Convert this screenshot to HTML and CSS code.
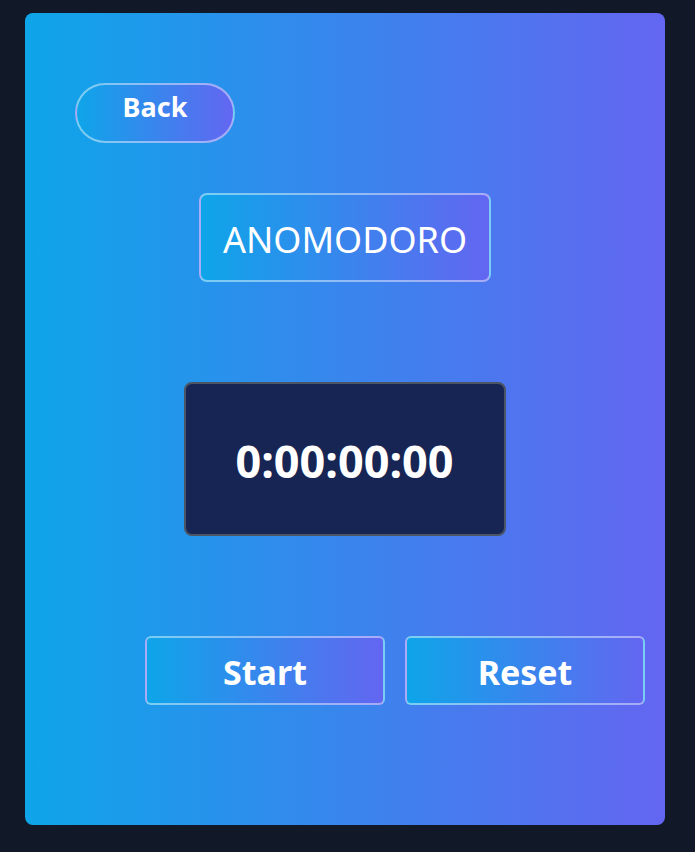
FILE: index.html
```html
<!DOCTYPE html>
<html>
<head>
<meta charset="utf-8">
<link rel="stylesheet" href="styles.css">
</head>
<body>
<div class="card">
  <div class="back-row"><button class="btn back">Back</button></div>
  <div class="title-row"><div class="grad title">ANOMODORO</div></div>
  <div class="timer-row"><div class="timer">0:00:00:00</div></div>
  <div class="actions">
    <button class="btn action">Start</button>
    <button class="btn action">Reset</button>
  </div>
</div>
</body>
</html>
```
FILE: styles.css
```css
html, body { margin: 0; padding: 0; }
body {
  background: #111827;
  width: 695px;
  height: 852px;
  font-family: "Noto Sans", "Open Sans", sans-serif;
  color: #fff;
  padding: 13px 0 0 25px;
  box-sizing: border-box;
}
.card {
  width: 640px;
  height: 812px;
  border-radius: 8px;
  background: linear-gradient(to right, #0ea5e9, #6366f1);
  box-sizing: border-box;
  padding: 70px 0 0 50px;
  display: flex;
  flex-direction: column;
}
.btn, .grad {
  background: linear-gradient(to right, #0ea5e9, #6366f1);
  border: 2px solid rgba(255,255,255,0.45);
  color: #fff;
  font-family: inherit;
  box-sizing: border-box;
  padding: 0;
}
.back {
  width: 160px;
  height: 60px;
  border-radius: 30px;
  font-size: 27px;
  font-weight: 700;
  line-height: 44px;
  display: block;
  text-align: center;
  padding-bottom: 14px;
}
.title-row { display: flex; justify-content: center; margin: 50px 0 0 -50px; }
.title {
  width: 292px;
  height: 89px;
  border-radius: 8px;
  font-size: 36px;
  display: flex;
  align-items: center;
  justify-content: center;
  padding-top: 3px;
}
.timer-row { display: flex; justify-content: center; margin: 100px 0 0 -51px; }
.timer {
  width: 322px;
  height: 154px;
  background: #172554;
  border: 2px solid #4b5563;
  border-radius: 8px;
  box-sizing: border-box;
  display: flex;
  align-items: center;
  justify-content: center;
  font-size: 45px;
  font-weight: 700;
  padding-top: 3px;
}
.actions {
  display: flex;
  gap: 20px;
  margin: 100px 0 0 70px;
}
.action {
  width: 240px;
  height: 69px;
  border-radius: 6px;
  font-size: 34px;
  font-weight: 700;
  padding-top: 2px;
}
```
